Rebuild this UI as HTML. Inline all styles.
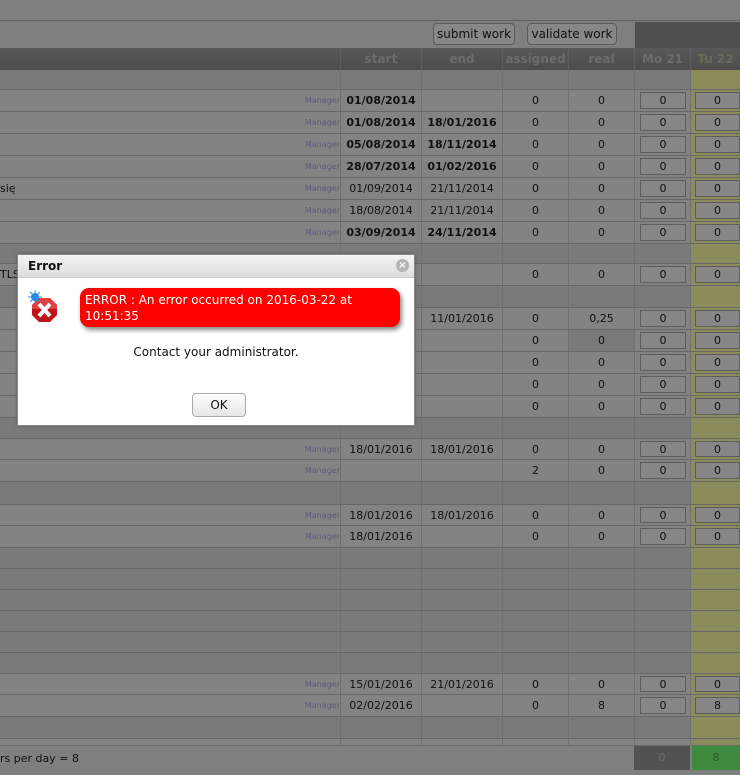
<!DOCTYPE html>
<html><head><meta charset="utf-8"><style>
*{margin:0;padding:0;box-sizing:border-box}
body{width:740px;height:775px;overflow:hidden;background:#7f7f7f;font-family:Verdana,"DejaVu Sans",sans-serif;font-size:11px;color:#111;position:relative}
.a{position:absolute}
.r{position:absolute;left:0;width:740px;border-bottom:1px solid #666}
.d{background:#838383}.g{background:#7a7a7a}
.c{position:absolute;top:0;height:100%;border-left:1px solid #707070;display:flex;align-items:center;justify-content:center}
.tu{background:#8b8b5c}
.box{position:absolute;top:2px;bottom:2px;border:1px solid #5c5c5c;background:#868686;display:flex;align-items:center;justify-content:center}
.m{position:absolute;right:400px;top:0;height:100%;display:flex;align-items:center;font-size:8px;color:#5a5a7c}
.b{font-weight:bold}
.nm{position:absolute;left:0;top:0;height:100%;display:flex;align-items:center}
</style></head><body>
<div class="a" style="left:0;top:20px;width:740px;height:1px;background:#5f5f5f"></div>
<div class="a" style="left:433px;top:23px;width:82px;height:22px;border:1px solid #5a5a5a;border-radius:4px;background:#878787;text-align:center;line-height:20px;font-size:12px">submit work</div>
<div class="a" style="left:527px;top:23px;width:90px;height:22px;border:1px solid #5a5a5a;border-radius:4px;background:#878787;text-align:center;line-height:20px;font-size:12px">validate work</div>
<div class="a" style="left:635px;top:22px;width:105px;height:26px;background:#4f4f4f"></div>
<div class="a" style="left:0;top:48px;width:740px;height:22px;background:linear-gradient(#585858,#4d4d4d);color:#6c6c6c;font-weight:bold;font-size:12px">
<div class="c" style="left:340px;width:81px;border-color:#5f5f5f">start</div>
<div class="c" style="left:421px;width:81px;border-color:#5f5f5f">end</div>
<div class="c" style="left:502px;width:66px;border-color:#5f5f5f">assigned</div>
<div class="c" style="left:568px;width:66px;border-color:#5f5f5f">real</div>
<div class="c" style="left:634px;width:56px;border-color:#5f5f5f">Mo 21</div>
<div class="c" style="left:690px;width:50px;border-color:#5f5f5f;color:#6a6a5a">Tu 22</div>
</div>

<!-- rows -->
<div class="r g" style="top:70px;height:20px"><div class="c" style="left:340px;width:81px"></div><div class="c" style="left:421px;width:81px"></div><div class="c" style="left:502px;width:66px"></div><div class="c" style="left:568px;width:66px"></div><div class="c" style="left:634px;width:56px"></div><div class="c tu" style="left:690px;width:50px"></div></div>

<div class="r d" style="top:90px;height:22px"><span class="m">Manager</span><div class="c b" style="left:340px;width:81px">01/08/2014</div><div class="c" style="left:421px;width:81px"></div><div class="c" style="left:502px;width:66px">0</div><div class="c" style="left:568px;width:66px">0</div><div class="c" style="left:634px;width:56px"></div><div class="c tu" style="left:690px;width:50px"></div><div class="box" style="left:640px;width:46px">0</div><div class="box" style="left:695px;width:45px">0</div></div>
<div class="r d" style="top:112px;height:22px"><span class="m">Manager</span><div class="c b" style="left:340px;width:81px">01/08/2014</div><div class="c b" style="left:421px;width:81px">18/01/2016</div><div class="c" style="left:502px;width:66px">0</div><div class="c" style="left:568px;width:66px">0</div><div class="c" style="left:634px;width:56px"></div><div class="c tu" style="left:690px;width:50px"></div><div class="box" style="left:640px;width:46px">0</div><div class="box" style="left:695px;width:45px">0</div></div>
<div class="r d" style="top:134px;height:22px"><span class="m">Manager</span><div class="c b" style="left:340px;width:81px">05/08/2014</div><div class="c b" style="left:421px;width:81px">18/11/2014</div><div class="c" style="left:502px;width:66px">0</div><div class="c" style="left:568px;width:66px">0</div><div class="c" style="left:634px;width:56px"></div><div class="c tu" style="left:690px;width:50px"></div><div class="box" style="left:640px;width:46px">0</div><div class="box" style="left:695px;width:45px">0</div></div>
<div class="r d" style="top:156px;height:22px"><span class="m">Manager</span><div class="c b" style="left:340px;width:81px">28/07/2014</div><div class="c b" style="left:421px;width:81px">01/02/2016</div><div class="c" style="left:502px;width:66px">0</div><div class="c" style="left:568px;width:66px">0</div><div class="c" style="left:634px;width:56px"></div><div class="c tu" style="left:690px;width:50px"></div><div class="box" style="left:640px;width:46px">0</div><div class="box" style="left:695px;width:45px">0</div></div>
<div class="r d" style="top:178px;height:22px"><span class="nm">się</span><span class="m">Manager</span><div class="c" style="left:340px;width:81px">01/09/2014</div><div class="c" style="left:421px;width:81px">21/11/2014</div><div class="c" style="left:502px;width:66px">0</div><div class="c" style="left:568px;width:66px">0</div><div class="c" style="left:634px;width:56px"></div><div class="c tu" style="left:690px;width:50px"></div><div class="box" style="left:640px;width:46px">0</div><div class="box" style="left:695px;width:45px">0</div></div>
<div class="r d" style="top:200px;height:22px"><span class="m">Manager</span><div class="c" style="left:340px;width:81px">18/08/2014</div><div class="c" style="left:421px;width:81px">21/11/2014</div><div class="c" style="left:502px;width:66px">0</div><div class="c" style="left:568px;width:66px">0</div><div class="c" style="left:634px;width:56px"></div><div class="c tu" style="left:690px;width:50px"></div><div class="box" style="left:640px;width:46px">0</div><div class="box" style="left:695px;width:45px">0</div></div>
<div class="r d" style="top:222px;height:22px"><span class="m">Manager</span><div class="c b" style="left:340px;width:81px">03/09/2014</div><div class="c b" style="left:421px;width:81px">24/11/2014</div><div class="c" style="left:502px;width:66px">0</div><div class="c" style="left:568px;width:66px">0</div><div class="c" style="left:634px;width:56px"></div><div class="c tu" style="left:690px;width:50px"></div><div class="box" style="left:640px;width:46px">0</div><div class="box" style="left:695px;width:45px">0</div></div>

<div class="r g" style="top:244px;height:20px"><div class="c" style="left:340px;width:81px"></div><div class="c" style="left:421px;width:81px"></div><div class="c" style="left:502px;width:66px"></div><div class="c" style="left:568px;width:66px"></div><div class="c" style="left:634px;width:56px"></div><div class="c tu" style="left:690px;width:50px"></div></div>
<div class="r d" style="top:264px;height:22px"><span class="nm">TLS</span><div class="c" style="left:340px;width:81px"></div><div class="c" style="left:421px;width:81px"></div><div class="c" style="left:502px;width:66px">0</div><div class="c" style="left:568px;width:66px">0</div><div class="c" style="left:634px;width:56px"></div><div class="c tu" style="left:690px;width:50px"></div><div class="box" style="left:640px;width:46px">0</div><div class="box" style="left:695px;width:45px">0</div></div>
<div class="r g" style="top:286px;height:22px"><div class="c" style="left:340px;width:81px"></div><div class="c" style="left:421px;width:81px"></div><div class="c" style="left:502px;width:66px"></div><div class="c" style="left:568px;width:66px"></div><div class="c" style="left:634px;width:56px"></div><div class="c tu" style="left:690px;width:50px"></div></div>
<div class="r d" style="top:308px;height:22px"><div class="c" style="left:340px;width:81px"></div><div class="c" style="left:421px;width:81px">11/01/2016</div><div class="c" style="left:502px;width:66px">0</div><div class="c" style="left:568px;width:66px">0,25</div><div class="c" style="left:634px;width:56px"></div><div class="c tu" style="left:690px;width:50px"></div><div class="box" style="left:640px;width:46px">0</div><div class="box" style="left:695px;width:45px">0</div></div>
<div class="r d" style="top:330px;height:22px"><div class="c" style="left:340px;width:81px"></div><div class="c" style="left:421px;width:81px"></div><div class="c" style="left:502px;width:66px">0</div><div class="c" style="left:568px;width:66px;background:#7a7a7a">0</div><div class="c" style="left:634px;width:56px"></div><div class="c tu" style="left:690px;width:50px"></div><div class="box" style="left:640px;width:46px">0</div><div class="box" style="left:695px;width:45px">0</div></div>
<div class="r d" style="top:352px;height:22px"><div class="c" style="left:340px;width:81px"></div><div class="c" style="left:421px;width:81px"></div><div class="c" style="left:502px;width:66px">0</div><div class="c" style="left:568px;width:66px">0</div><div class="c" style="left:634px;width:56px"></div><div class="c tu" style="left:690px;width:50px"></div><div class="box" style="left:640px;width:46px">0</div><div class="box" style="left:695px;width:45px">0</div></div>
<div class="r d" style="top:374px;height:22px"><div class="c" style="left:340px;width:81px"></div><div class="c" style="left:421px;width:81px"></div><div class="c" style="left:502px;width:66px">0</div><div class="c" style="left:568px;width:66px">0</div><div class="c" style="left:634px;width:56px"></div><div class="c tu" style="left:690px;width:50px"></div><div class="box" style="left:640px;width:46px">0</div><div class="box" style="left:695px;width:45px">0</div></div>
<div class="r d" style="top:396px;height:22px"><div class="c" style="left:340px;width:81px"></div><div class="c" style="left:421px;width:81px"></div><div class="c" style="left:502px;width:66px">0</div><div class="c" style="left:568px;width:66px">0</div><div class="c" style="left:634px;width:56px"></div><div class="c tu" style="left:690px;width:50px"></div><div class="box" style="left:640px;width:46px">0</div><div class="box" style="left:695px;width:45px">0</div></div>
<div class="r g" style="top:418px;height:21px"><div class="c" style="left:340px;width:81px"></div><div class="c" style="left:421px;width:81px"></div><div class="c" style="left:502px;width:66px"></div><div class="c" style="left:568px;width:66px"></div><div class="c" style="left:634px;width:56px"></div><div class="c tu" style="left:690px;width:50px"></div></div>
<div class="r d" style="top:439px;height:21px"><span class="m">Manager</span><div class="c" style="left:340px;width:81px">18/01/2016</div><div class="c" style="left:421px;width:81px">18/01/2016</div><div class="c" style="left:502px;width:66px">0</div><div class="c" style="left:568px;width:66px">0</div><div class="c" style="left:634px;width:56px"></div><div class="c tu" style="left:690px;width:50px"></div><div class="box" style="left:640px;width:46px">0</div><div class="box" style="left:695px;width:45px">0</div></div>
<div class="r d" style="top:460px;height:22px"><span class="m">Manager</span><div class="c" style="left:340px;width:81px"></div><div class="c" style="left:421px;width:81px"></div><div class="c" style="left:502px;width:66px">2</div><div class="c" style="left:568px;width:66px">0</div><div class="c" style="left:634px;width:56px"></div><div class="c tu" style="left:690px;width:50px"></div><div class="box" style="left:640px;width:46px">0</div><div class="box" style="left:695px;width:45px">0</div></div>
<div class="r g" style="top:482px;height:23px"><div class="c" style="left:340px;width:81px"></div><div class="c" style="left:421px;width:81px"></div><div class="c" style="left:502px;width:66px"></div><div class="c" style="left:568px;width:66px"></div><div class="c" style="left:634px;width:56px"></div><div class="c tu" style="left:690px;width:50px"></div></div>
<div class="r d" style="top:505px;height:21px"><span class="m">Manager</span><div class="c" style="left:340px;width:81px">18/01/2016</div><div class="c" style="left:421px;width:81px">18/01/2016</div><div class="c" style="left:502px;width:66px">0</div><div class="c" style="left:568px;width:66px">0</div><div class="c" style="left:634px;width:56px"></div><div class="c tu" style="left:690px;width:50px"></div><div class="box" style="left:640px;width:46px">0</div><div class="box" style="left:695px;width:45px">0</div></div>
<div class="r d" style="top:526px;height:22px"><span class="m">Manager</span><div class="c" style="left:340px;width:81px">18/01/2016</div><div class="c" style="left:421px;width:81px"></div><div class="c" style="left:502px;width:66px">0</div><div class="c" style="left:568px;width:66px">0</div><div class="c" style="left:634px;width:56px"></div><div class="c tu" style="left:690px;width:50px"></div><div class="box" style="left:640px;width:46px">0</div><div class="box" style="left:695px;width:45px">0</div></div>
<div class="r g" style="top:548px;height:21px"><div class="c" style="left:340px;width:81px"></div><div class="c" style="left:421px;width:81px"></div><div class="c" style="left:502px;width:66px"></div><div class="c" style="left:568px;width:66px"></div><div class="c" style="left:634px;width:56px"></div><div class="c tu" style="left:690px;width:50px"></div></div>
<div class="r g" style="top:569px;height:21px"><div class="c" style="left:340px;width:81px"></div><div class="c" style="left:421px;width:81px"></div><div class="c" style="left:502px;width:66px"></div><div class="c" style="left:568px;width:66px"></div><div class="c" style="left:634px;width:56px"></div><div class="c tu" style="left:690px;width:50px"></div></div>
<div class="r g" style="top:590px;height:21px"><div class="c" style="left:340px;width:81px"></div><div class="c" style="left:421px;width:81px"></div><div class="c" style="left:502px;width:66px"></div><div class="c" style="left:568px;width:66px"></div><div class="c" style="left:634px;width:56px"></div><div class="c tu" style="left:690px;width:50px"></div></div>
<div class="r g" style="top:611px;height:21px"><div class="c" style="left:340px;width:81px"></div><div class="c" style="left:421px;width:81px"></div><div class="c" style="left:502px;width:66px"></div><div class="c" style="left:568px;width:66px"></div><div class="c" style="left:634px;width:56px"></div><div class="c tu" style="left:690px;width:50px"></div></div>
<div class="r g" style="top:632px;height:21px"><div class="c" style="left:340px;width:81px"></div><div class="c" style="left:421px;width:81px"></div><div class="c" style="left:502px;width:66px"></div><div class="c" style="left:568px;width:66px"></div><div class="c" style="left:634px;width:56px"></div><div class="c tu" style="left:690px;width:50px"></div></div>
<div class="r g" style="top:653px;height:21px"><div class="c" style="left:340px;width:81px"></div><div class="c" style="left:421px;width:81px"></div><div class="c" style="left:502px;width:66px"></div><div class="c" style="left:568px;width:66px"></div><div class="c" style="left:634px;width:56px"></div><div class="c tu" style="left:690px;width:50px"></div></div>
<div class="r d" style="top:674px;height:21px"><span class="m">Manager</span><div class="c" style="left:340px;width:81px">15/01/2016</div><div class="c" style="left:421px;width:81px">21/01/2016</div><div class="c" style="left:502px;width:66px">0</div><div class="c" style="left:568px;width:66px">0</div><div class="c" style="left:634px;width:56px"></div><div class="c tu" style="left:690px;width:50px"></div><div class="box" style="left:640px;width:46px">0</div><div class="box" style="left:695px;width:45px">0</div></div>
<div class="r d" style="top:695px;height:22px"><span class="m">Manager</span><div class="c" style="left:340px;width:81px">02/02/2016</div><div class="c" style="left:421px;width:81px"></div><div class="c" style="left:502px;width:66px">0</div><div class="c" style="left:568px;width:66px">8</div><div class="c" style="left:634px;width:56px"></div><div class="c tu" style="left:690px;width:50px"></div><div class="box" style="left:640px;width:46px">0</div><div class="box" style="left:695px;width:45px">8</div></div>
<div class="r g" style="top:717px;height:22px"><div class="c" style="left:340px;width:81px"></div><div class="c" style="left:421px;width:81px"></div><div class="c" style="left:502px;width:66px"></div><div class="c" style="left:568px;width:66px"></div><div class="c" style="left:634px;width:56px"></div><div class="c tu" style="left:690px;width:50px"></div></div>
<div class="r d" style="top:739px;height:6px;border:0"><div class="c" style="left:340px;width:81px"></div><div class="c" style="left:421px;width:81px"></div><div class="c" style="left:502px;width:66px"></div><div class="c" style="left:568px;width:66px"></div><div class="c" style="left:634px;width:56px"></div><div class="c tu" style="left:690px;width:50px"></div></div>

<div class="a" style="left:0;top:745px;width:740px;height:30px;background:#7f7f7f;border-top:1px solid #6a6a6a"></div>
<div class="a" style="left:0;top:751px;line-height:16px">rs per day = 8</div>
<div class="a" style="left:634px;top:746px;width:56px;height:24px;background:#525252;color:#6a6a6a;text-align:center;line-height:24px">0</div>
<div class="a" style="left:692px;top:746px;width:48px;height:24px;background:#3e8a3e;color:#2a5a2a;text-align:center;line-height:24px">8</div>

<!-- modal -->
<div class="a" style="left:17px;top:254px;width:398px;height:172px;background:#fff;border:1px solid #8a8a8a;box-shadow:0 0 3px #555">
<div style="height:23px;background:linear-gradient(#f4f4f4,#dedede);border-bottom:1px solid #ccc;font-weight:bold;font-size:12px;line-height:23px;padding-left:10px">Error</div>
<div class="a" style="left:378px;top:4px;width:13px;height:13px;border-radius:50%;background:#b4b4b4;color:#fff;font-size:10px;line-height:13px;text-align:center;font-weight:bold">×</div>
<svg class="a" style="left:10px;top:34px" width="34" height="36" viewBox="0 0 34 36">
<polygon points="11,9 22,9 29,16 29,26 22,33 11,33 4,26 4,16" fill="#c0141c"/>
<polygon points="11,9 22,9 29,16 29,20 4,20 4,16" fill="#e04040"/>
<path d="M11,15 L22,27 M22,15 L11,27" stroke="#fff" stroke-width="4"/>
<circle cx="7" cy="8" r="4" fill="#2a8ae0"/>
<path d="M7,1 V15 M0,8 H14 M2,3 L12,13 M12,3 L2,13" stroke="#2a8ae0" stroke-width="1"/>
</svg>
<div class="a" style="left:62px;top:33px;width:320px;height:39px;background:#f00;border-radius:9px;box-shadow:2px 3px 5px #888;color:#fff;font-size:12px;line-height:16px;padding:4px 5px">ERROR : An error occurred on 2016-03-22 at 10:51:35</div>
<div class="a" style="left:0;top:90px;width:396px;text-align:center;font-size:12px">Contact your administrator.</div>
<div class="a" style="left:174px;top:138px;width:54px;height:24px;border:1px solid #aaa;border-radius:4px;background:linear-gradient(#fff,#e6e6e6);text-align:center;line-height:22px;font-size:12px">OK</div>
</div>
</body></html>
